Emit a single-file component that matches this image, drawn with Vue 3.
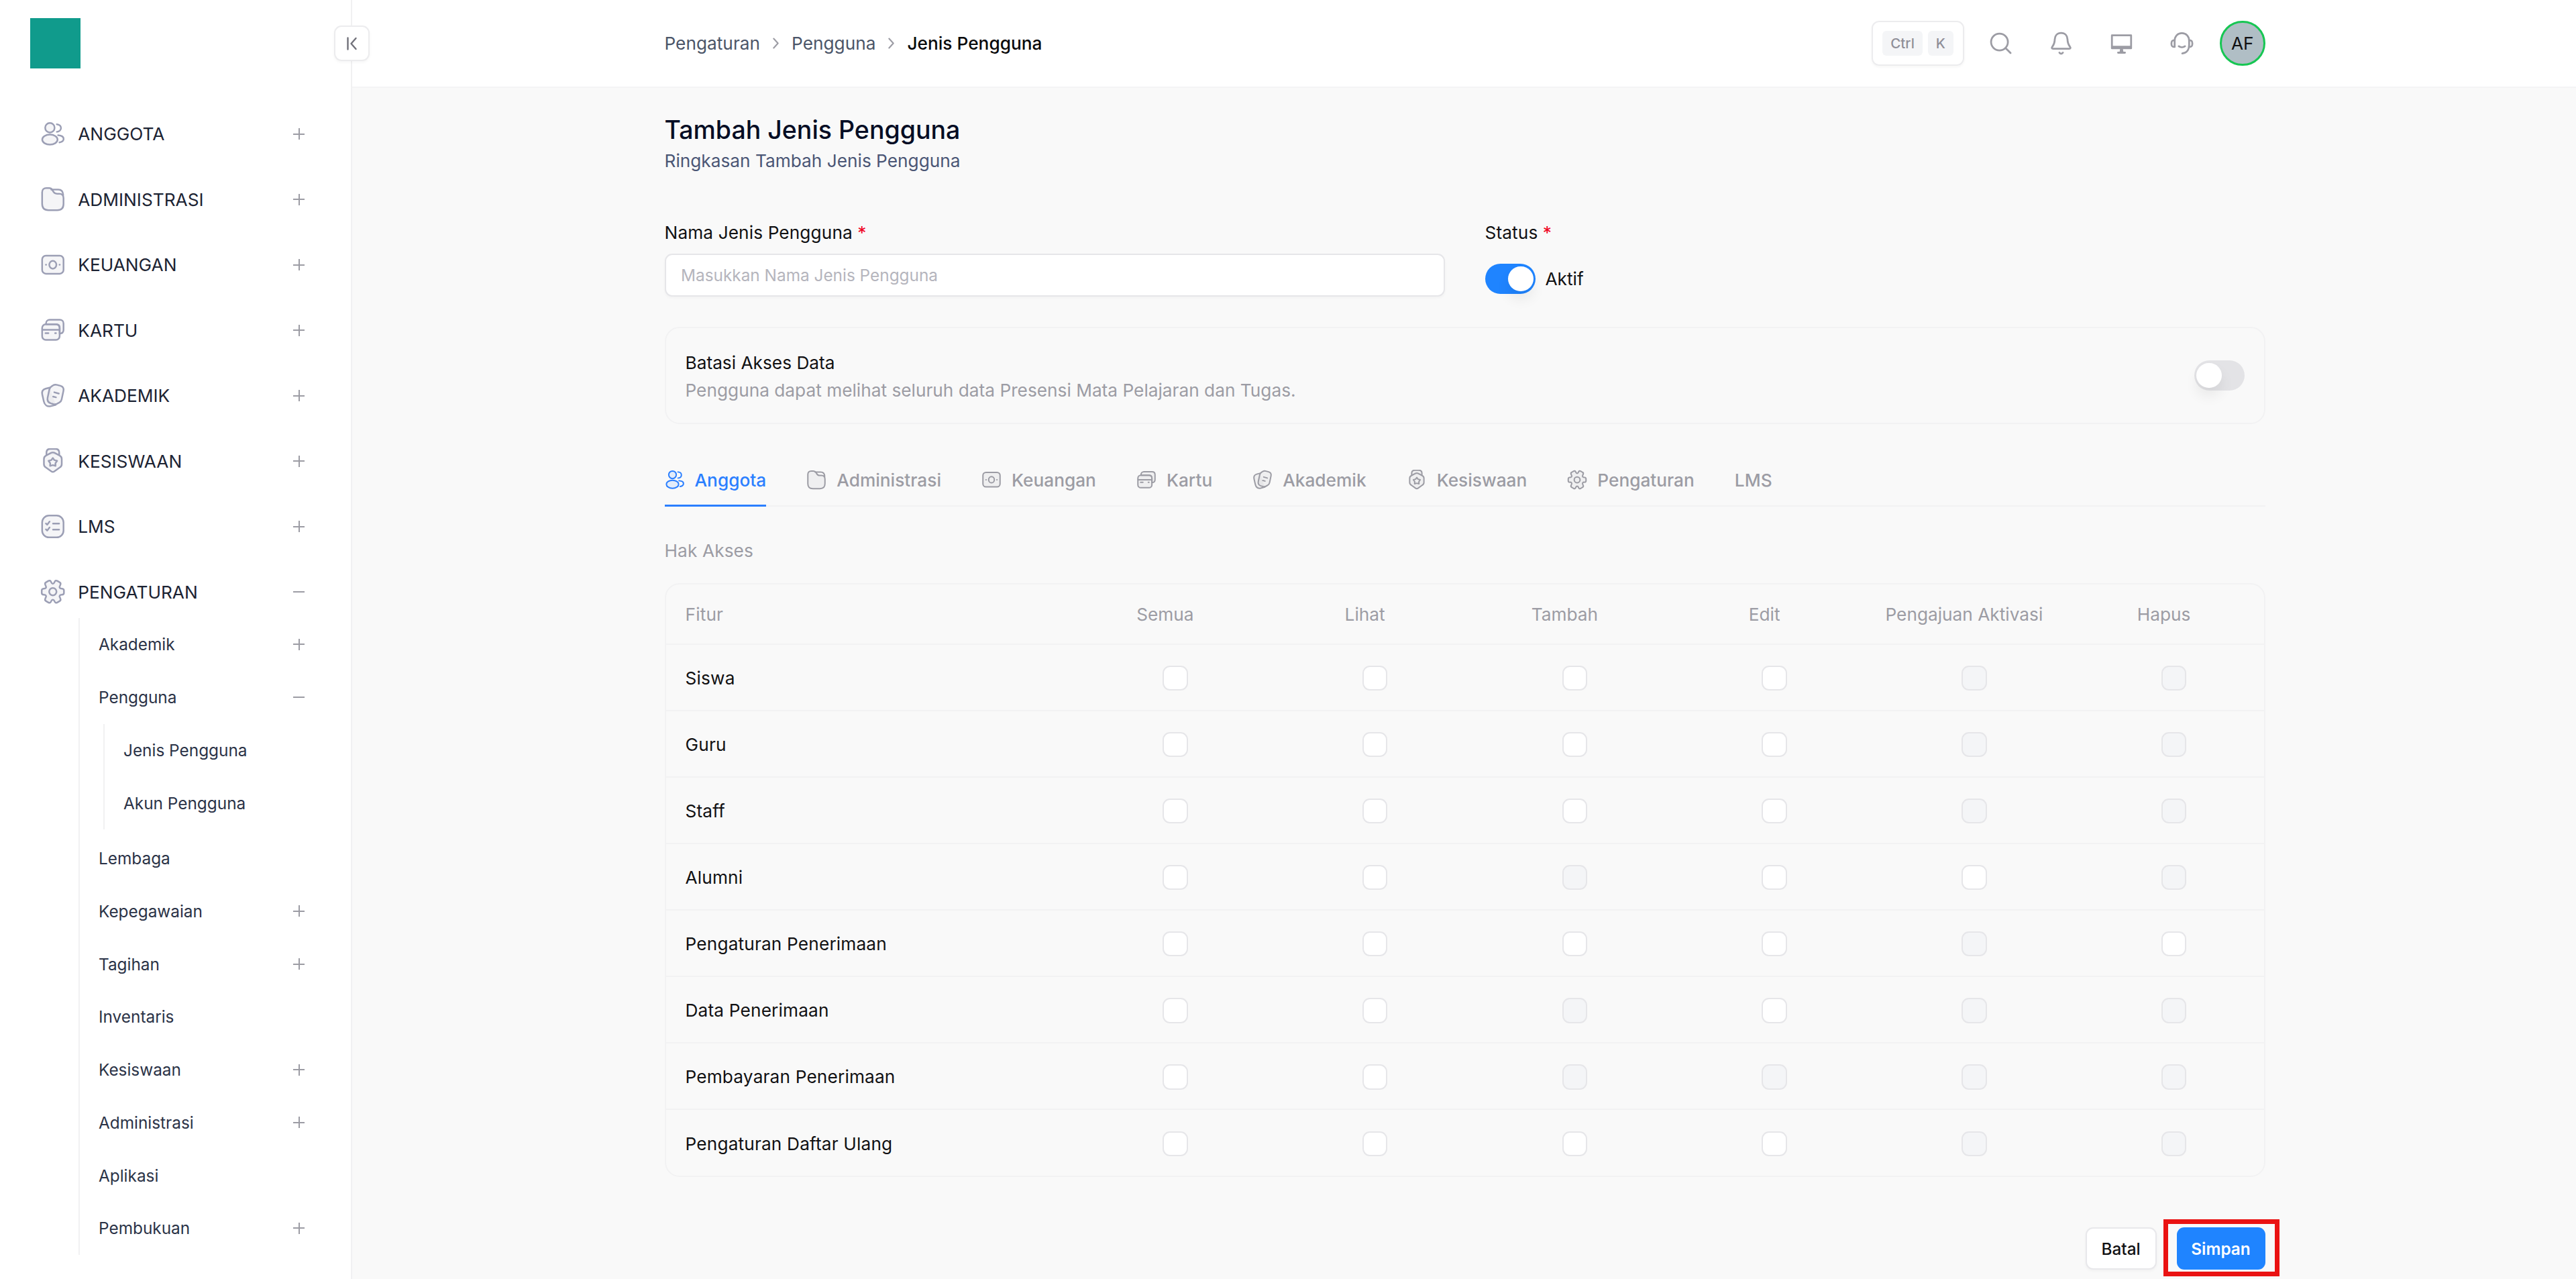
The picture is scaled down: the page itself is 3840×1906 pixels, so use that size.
<template>
  <div class="app">
    <!-- icon sprite -->
    <svg
      class="sprite"
      aria-hidden="true"
    >
      <symbol
        id="ic-anggota"
        viewBox="0 0 24 24"
      >
        <circle
          class="tint"
          cx="9.2"
          cy="6"
          r="4.5"
        />
        <ellipse
          class="tint"
          cx="9.2"
          cy="17.3"
          rx="7.3"
          ry="4.8"
        />
        <path d="M15.8 2.7c2.4.2 4 1.7 4 3.6s-1.6 3.4-4 3.6M17 13.1c3.2.3 5.3 1.7 5.3 3.5 0 1.6-1.5 2.9-4 3.4" />
      </symbol>
      <symbol
        id="ic-administrasi"
        viewBox="0 0 24 24"
      >
        <path
          class="tint"
          d="M1.8 8V5.5C1.8 3 3.4 1.5 5.8 1.5h2.7c1.500 0 2.300.6 3 1.700l1 1.700c.9 1.500 1.900 1.900 3.500 1.900h2.200c2.800.1 4 1.700 4 4.300v5.500c0 4-2 5.900-6 5.900H7.800c-4 0-6-2-6-6z"
        />
        <path d="M10.5 2.8h6.7c2.900 0 4.500 1.600 4.700 5.200" />
      </symbol>
      <symbol
        id="ic-keuangan"
        viewBox="0 0 24 24"
      >
        <rect
          class="tint"
          x="1.8"
          y="3.2"
          width="20.4"
          height="17.2"
          rx="3.6"
        />
        <ellipse
          cx="12"
          cy="11.9"
          rx="3.4"
          ry="3.7"
        />
        <path d="M5.4 11.9h.2M18.400 11.900h.2" />
      </symbol>
      <symbol
        id="ic-kartu"
        viewBox="0 0 24 24"
      >
        <path
          class="tint"
          d="M5.500 6.600V5.800c0-2 1.500-3.500 3.500-3.500h9.600c2.300 0 3.600 1.500 3.600 3.500v6.200c0 2-1.200 3.300-3.700 3.500V9.900c0-2-1.300-3.300-3.300-3.300z"
        />
        <rect
          class="tint"
          x="1.8"
          y="6.6"
          width="16.7"
          height="14.8"
          rx="3.5"
        />
        <path d="M2 11.900h16.300M5 15h2.800M14.200 15h.8" />
      </symbol>
      <symbol
        id="ic-akademik"
        viewBox="0 0 24 24"
      >
        <path
          class="tint"
          d="M8.800 4.300 5 5.300C2.500 6.100 1.300 8 1.900 10.800l1.500 6.600c.8 3.500 3.300 5.200 6.400 4.600l5-1.300"
        />
        <path
          class="tint"
          d="M12.600 1.900c1.200-.6 2.400-.5 3.600-.2l3 .8c2.400.7 3.500 2.400 2.900 5l-1.700 8c-.3 1.500-1 2.400-2.200 3l-2.400 1.300c-1.100.5-2.100.5-3.300.2l-2.400-.7C7.700 18.500 6.500 16.500 7 14l1.700-8c.4-1.600 1.100-2.500 2.400-3.200z"
        />
        <path d="m13.400 8.700 4.300 1.200M12.300 12.800l2.700.7" />
      </symbol>
      <symbol
        id="ic-kesiswaan"
        viewBox="0 0 24 24"
      >
        <path
          class="tint"
          d="M5.900 6V4.300C5.900 1.800 7.200.6 9.600.6h4.800c2.400 0 3.700 1.200 3.700 3.700V6"
        />
        <path
          class="tint"
          d="M10.600 4.300c1-.5 1.800-.5 2.800 0l5.100 2.700c1.300.7 2 1.700 2 3.200v5c0 1.500-.7 2.500-2 3.200l-5.100 3.700c-1 .7-1.800.7-2.800 0l-5.100-3.700c-1.300-.7-2-1.700-2-3.200v-5c0-1.500.7-2.500 2-3.200z"
        />
        <path d="m12 9.300 1.500 2 2.600.7-1.600 2.200.1 2.600-2.600-.7-2.600.7.1-2.600L7.900 12l2.600-.7z" />
      </symbol>
      <symbol
        id="ic-lms"
        viewBox="0 0 24 24"
      >
        <rect
          class="tint"
          x="1.8"
          y="1.5"
          width="20.4"
          height="20.8"
          rx="6.5"
        />
        <path d="m5.400 9 1.200 1.200 2.300-3M5.400 14.600l1.200 1.200 2.300-3M12.200 9.100H18M12.200 14.900H18" />
      </symbol>
      <symbol
        id="ic-pengaturan"
        viewBox="0 0 24 24"
      >
        <path
          class="tint"
          d="M12 4.400C13.300 4.400 13.400 3.200 13.800 2.400C14.300 1.400 15.200 1.100 16.200 1.700L18.400 3C19.500 3.600 19.600 4.600 19.200 5.500C18.800 6.500 17.900 7.300 18.600 8.300C19.200 9.200 20 9.100 20.900 9.100C22 9.200 22.600 9.900 22.600 10.900V13.100C22.600 14.100 22 14.800 20.900 14.900C20 14.900 19.200 14.800 18.600 15.700C17.900 16.700 18.800 17.500 19.200 18.500C19.600 19.400 19.500 20.400 18.400 21L16.200 22.300C15.200 22.900 14.300 22.600 13.800 21.600C13.400 20.800 13.300 19.600 12 19.600C10.700 19.600 10.600 20.800 10.200 21.600C9.700 22.600 8.800 22.900 7.800 22.300L5.600 21C4.500 20.400 4.400 19.400 4.800 18.500C5.200 17.500 6.100 16.700 5.400 15.700C4.800 14.800 4 14.900 3.100 14.900C2 14.800 1.400 14.100 1.400 13.100V10.900C1.400 9.900 2 9.200 3.100 9.100C4 9.100 4.800 9.200 5.400 8.300C6.100 7.300 5.200 6.500 4.800 5.500C4.400 4.600 4.500 3.600 5.600 3L7.800 1.700C8.800 1.100 9.700 1.400 10.200 2.400C10.600 3.200 10.700 4.400 12 4.400z"
        />
        <circle
          cx="12"
          cy="12"
          r="3.5"
        />
      </symbol>
      <symbol
        id="ic-search"
        viewBox="0 0 24 24"
      >
        <circle
          cx="10.7"
          cy="10.7"
          r="8.6"
        />
        <path d="m17 17 5 5" />
      </symbol>
      <symbol
        id="ic-bell"
        viewBox="0 0 24 24"
      >
        <path d="M12 1.500c3.900 0 6.300 2.600 6.500 6.500.1 3.300.8 5.300 2.500 7.500 1 1.300.6 2-.8 2H3.800c-1.400 0-1.800-.7-.8-2 1.700-2.200 2.400-4.200 2.500-7.500.2-3.900 2.600-6.500 6.500-6.500zM10.200 21.500c.8 1.500 2.800 1.500 3.600 0" />
      </symbol>
      <symbol
        id="ic-monitor"
        viewBox="0 0 24 24"
      >
        <path d="M2.200 3.900h19.600v13.200H2.200z" />
        <path
          class="solid"
          d="M2.200 14.500h19.600v2.800H2.200zM10.600 17.300h2.800l.6 3.700h-4z"
        />
        <path d="M8.500 21.600h7" />
      </symbol>
      <symbol
        id="ic-headset"
        viewBox="0 0 24 24"
      >
        <path d="M4.600 9.500C4.600 4.800 7.600 1.700 12 1.700s7.400 3.100 7.400 7.800v4.200c0 5-2.800 8.300-7 8.700M4.600 8.800C2 8.800 1.300 9.700 1.300 12.300s.7 3.400 3.300 3.400zM19.400 8.800c2.600 0 3.300.9 3.300 3.500s-.7 3.400-3.300 3.400M8.800 15c1.800 1.400 4.600 1.400 6.400 0" />
      </symbol>
    </svg>

    <aside class="sidebar">
      <div class="brand">
        <div class="logo" />
      </div>
      <button class="collapse-btn">
        <svg
          class="collapse-icon"
          viewBox="0 0 16 20"
        >
          <path d="M2 1.500v17M14 2 7 10l7 8" />
        </svg>
      </button>

      <nav class="menu">
        <div
          v-for="item in menu"
          :key="item.label"
          class="menu-item"
        >
          <svg class="icon">
            <use :href="`#ic-${item.icon}`" />
          </svg>
          <span class="menu-label">{{ item.label }}</span>
          <span
            class="sign"
            :class="{ open: item.open }"
          />
        </div>
      </nav>

      <div class="submenu">
        <template
          v-for="sub in submenu"
          :key="sub.label"
        >
          <div class="sub-item">
            <span>{{ sub.label }}</span>
            <span
              v-if="sub.expandable"
              class="sign"
              :class="{ open: sub.children }"
            />
          </div>
          <div
            v-if="sub.children"
            class="sub-children"
          >
            <div
              v-for="child in sub.children"
              :key="child"
              class="sub-item"
            >
              {{ child }}
            </div>
          </div>
        </template>
      </div>
    </aside>

    <div class="page">
      <header class="header">
        <div class="container header-inner">
          <div class="breadcrumb">
            <span>Pengaturan</span>
            <svg
              class="chevron"
              viewBox="0 0 10 16"
            >
              <path d="m2 1.500 6 6.500-6 6.500" />
            </svg>
            <span>Pengguna</span>
            <svg
              class="chevron"
              viewBox="0 0 10 16"
            >
              <path d="m2 1.500 6 6.500-6 6.500" />
            </svg>
            <span class="current">Jenis Pengguna</span>
          </div>

          <div class="toolbar">
            <div class="shortcut">
              <kbd>Ctrl</kbd>
              <kbd>K</kbd>
            </div>
            <svg
              v-for="name in tools"
              :key="name"
              class="tool-icon"
            >
              <use :href="`#ic-${name}`" />
            </svg>
            <div class="avatar">
              AF
            </div>
          </div>
        </div>
      </header>

      <main class="container content">
        <h1>Tambah Jenis Pengguna</h1>
        <p class="subtitle">
          Ringkasan Tambah Jenis Pengguna
        </p>

        <div class="form-row">
          <div class="field name-field">
            <label>Nama Jenis Pengguna <i>*</i></label>
            <input
              type="text"
              placeholder="Masukkan Nama Jenis Pengguna"
            >
          </div>
          <div class="field">
            <label>Status <i>*</i></label>
            <div class="status">
              <span class="toggle on" />
              <span>Aktif</span>
            </div>
          </div>
        </div>

        <div class="card">
          <div class="card-text">
            <div class="card-title">
              Batasi Akses Data
            </div>
            <div class="card-desc">
              Pengguna dapat melihat seluruh data Presensi Mata Pelajaran dan Tugas.
            </div>
          </div>
          <span class="toggle" />
        </div>

        <div class="tabs">
          <div
            v-for="tab in tabs"
            :key="tab.label"
            class="tab"
            :class="{ active: tab.label === activeTab }"
          >
            <svg
              v-if="tab.icon"
              class="tab-icon"
            >
              <use :href="`#ic-${tab.icon}`" />
            </svg>
            <span>{{ tab.label }}</span>
          </div>
        </div>

        <div class="section-title">
          Hak Akses
        </div>

        <div class="table">
          <div class="row head">
            <div class="feature">
              Fitur
            </div>
            <div
              v-for="col in columns"
              :key="col"
              class="col-head"
            >
              {{ col }}
            </div>
          </div>
          <div
            v-for="row in rows"
            :key="row.label"
            class="row"
          >
            <div class="feature">
              {{ row.label }}
            </div>
            <div
              v-for="col in columns"
              :key="col"
              class="cell"
            >
              <span
                class="checkbox"
                :class="{ disabled: row.disabled.includes(col) }"
              />
            </div>
          </div>
        </div>

        <div class="actions">
          <button class="btn">
            Batal
          </button>
          <div class="save-wrap">
            <button class="btn primary">
              Simpan
            </button>
            <div class="highlight" />
          </div>
        </div>
      </main>
    </div>
  </div>
</template>

<script setup>
import { ref } from 'vue';

const menu = [
  { label: 'ANGGOTA', icon: 'anggota' },
  { label: 'ADMINISTRASI', icon: 'administrasi' },
  { label: 'KEUANGAN', icon: 'keuangan' },
  { label: 'KARTU', icon: 'kartu' },
  { label: 'AKADEMIK', icon: 'akademik' },
  { label: 'KESISWAAN', icon: 'kesiswaan' },
  { label: 'LMS', icon: 'lms' },
  { label: 'PENGATURAN', icon: 'pengaturan', open: true }
];

const submenu = [
  { label: 'Akademik', expandable: true },
  { label: 'Pengguna', expandable: true, children: ['Jenis Pengguna', 'Akun Pengguna'] },
  { label: 'Lembaga' },
  { label: 'Kepegawaian', expandable: true },
  { label: 'Tagihan', expandable: true },
  { label: 'Inventaris' },
  { label: 'Kesiswaan', expandable: true },
  { label: 'Administrasi', expandable: true },
  { label: 'Aplikasi' },
  { label: 'Pembukuan', expandable: true }
];

const tools = ['search', 'bell', 'monitor', 'headset'];

const activeTab = ref('Anggota');
const tabs = [
  { label: 'Anggota', icon: 'anggota' },
  { label: 'Administrasi', icon: 'administrasi' },
  { label: 'Keuangan', icon: 'keuangan' },
  { label: 'Kartu', icon: 'kartu' },
  { label: 'Akademik', icon: 'akademik' },
  { label: 'Kesiswaan', icon: 'kesiswaan' },
  { label: 'Pengaturan', icon: 'pengaturan' },
  { label: 'LMS' }
];

const columns = ['Semua', 'Lihat', 'Tambah', 'Edit', 'Pengajuan Aktivasi', 'Hapus'];

const rows = [
  { label: 'Siswa', disabled: ['Pengajuan Aktivasi', 'Hapus'] },
  { label: 'Guru', disabled: ['Pengajuan Aktivasi', 'Hapus'] },
  { label: 'Staff', disabled: ['Pengajuan Aktivasi', 'Hapus'] },
  { label: 'Alumni', disabled: ['Tambah', 'Hapus'] },
  { label: 'Pengaturan Penerimaan', disabled: ['Pengajuan Aktivasi'] },
  { label: 'Data Penerimaan', disabled: ['Tambah', 'Pengajuan Aktivasi', 'Hapus'] },
  { label: 'Pembayaran Penerimaan', disabled: ['Tambah', 'Edit', 'Pengajuan Aktivasi', 'Hapus'] },
  { label: 'Pengaturan Daftar Ulang', disabled: ['Pengajuan Aktivasi', 'Hapus'] }
];
</script>

<style>
body {
  background-color: #f9f9f9;
  overflow: hidden;
}
</style>

<style scoped>
.app {
  display: flex;
  height: 1906px;
  overflow: hidden;
  background-color: #f9f9f9;
  font-family: Inter, "Liberation Sans", sans-serif;
  font-size: 26.25px;
  color: #111113;
}

.app * {
  box-sizing: border-box;
}

.sprite {
  position: absolute;
  width: 0;
  height: 0;
}

svg {
  fill: none;
  stroke: currentColor;
  stroke-width: 1.6;
  stroke-linecap: round;
  stroke-linejoin: round;
  flex-shrink: 0;
}

.tint {
  fill: currentColor;
  fill-opacity: 0.1;
}

.solid {
  fill: currentColor;
  stroke: none;
}

/* sidebar */
.sidebar {
  position: relative;
  width: 525px;
  flex-shrink: 0;
  background-color: #fff;
  border-right: 2px solid #f1f1f2;
}

.brand {
  padding: 27px 0 0 45px;
  height: 162px;
}

.logo {
  width: 75px;
  height: 75px;
  background-color: #109b8c;
}

.collapse-btn {
  position: absolute;
  top: 38px;
  right: -28px;
  width: 53px;
  height: 53px;
  padding: 0;
  display: flex;
  align-items: center;
  justify-content: center;
  background-color: #fff;
  border: 2px solid #ececee;
  border-radius: 11px;
  box-shadow: 0 2px 4px rgba(0, 0, 0, 0.04);
  color: #71717a;
}

.collapse-icon {
  width: 17px;
  height: 20px;
  stroke-width: 2.4;
}

.menu {
  display: flex;
  flex-direction: column;
  gap: 22.5px;
}

.menu-item {
  display: flex;
  align-items: center;
  height: 75px;
  padding: 0 69px 0 60px;
}

.icon {
  width: 37.5px;
  height: 37.5px;
  margin-right: 18.75px;
  color: #9c9fb5;
}

.menu-label {
  flex: 1;
  color: #1c2333;
}

.sign {
  position: relative;
  width: 17px;
  height: 17px;
  flex-shrink: 0;
}

.sign::before,
.sign::after {
  content: "";
  position: absolute;
  background-color: #9c9ca4;
}

.sign::before {
  left: 0;
  top: 7.5px;
  width: 17px;
  height: 2px;
}

.sign::after {
  left: 7.5px;
  top: 0;
  width: 2px;
  height: 17px;
}

.sign.open::after {
  display: none;
}

.submenu {
  margin: 1.5px 69px 0 117px;
  padding-left: 28px;
  border-left: 2px solid #f1f1f2;
}

.sub-item {
  display: flex;
  align-items: center;
  justify-content: space-between;
  height: 78.75px;
  font-size: 24.375px;
  color: #2b3347;
}

.sub-children {
  margin-left: 7px;
  margin-bottom: 3.75px;
  padding-left: 28px;
  border-left: 2px solid #f1f1f2;
}

/* header */
.page {
  flex: 1;
}

.header {
  height: 131px;
  background-color: #fff;
  border-bottom: 2px solid #f4f4f5;
}

.container {
  width: 2386px;
  margin-left: 465.5px;
}

.header-inner {
  height: 129px;
  display: flex;
  align-items: center;
  justify-content: space-between;
}

.breadcrumb {
  display: flex;
  align-items: center;
  color: #4b5568;
}

.chevron {
  width: 11px;
  height: 17px;
  margin: 0 18px;
  color: #9c9ca4;
  stroke-width: 2;
}

.current {
  font-weight: 500;
  color: #09090b;
}

.toolbar {
  display: flex;
  align-items: center;
}

.shortcut {
  display: flex;
  align-items: center;
  gap: 8px;
  height: 67.5px;
  margin-right: 37px;
  padding: 0 14px;
  border: 2px solid #ececee;
  border-radius: 11px;
  box-shadow: 0 2px 4px rgba(0, 0, 0, 0.04);
}

kbd {
  padding: 0 12px;
  height: 37.5px;
  line-height: 37.5px;
  border-radius: 6px;
  background-color: #f4f5f7;
  color: #8f8f98;
  font-family: inherit;
  font-size: 20.6px;
  font-weight: 500;
}

.tool-icon {
  width: 35px;
  height: 35px;
  margin-right: 55px;
  color: #9c9ca4;
  stroke-width: 1.9;
}

.tool-icon:nth-last-child(2) {
  margin-right: 39px;
}

.avatar {
  width: 67.5px;
  height: 67.5px;
  border: 3px solid #17c653;
  border-radius: 50%;
  background-color: #b0bec5;
  text-align: center;
  line-height: 61.5px;
}

/* content */
.content {
  padding-top: 39px;
}

h1 {
  margin: 0;
  font-size: 37.5px;
  line-height: 48px;
  font-weight: 500;
  color: #050d24;
}

.subtitle {
  margin: 0;
  line-height: 44px;
  color: #4b5675;
}

.form-row {
  display: flex;
  gap: 60px;
  margin-top: 67px;
}

.name-field {
  width: 1163px;
}

label {
  display: block;
  line-height: 36px;
  letter-spacing: 0.1px;
}

label i {
  font-style: normal;
  color: #f00020;
}

input {
  display: block;
  width: 100%;
  height: 64px;
  margin-top: 13px;
  padding: 0 22.5px;
  border: 2px solid #e6e6e9;
  border-radius: 11px;
  box-shadow: 0 2px 4px rgba(0, 0, 0, 0.03);
  background-color: #fff;
  font-family: inherit;
  font-size: 24.375px;
}

input::placeholder {
  color: #b5b5bd;
  opacity: 1;
}

.status {
  display: flex;
  align-items: center;
  gap: 15px;
  margin-top: 28px;
}

.toggle {
  width: 75px;
  height: 45px;
  padding: 3.75px;
  border-radius: 23px;
  background-color: #e3e3e6;
}

.toggle::before {
  content: "";
  display: block;
  width: 37.5px;
  height: 37.5px;
  border-radius: 50%;
  background-color: #fff;
  box-shadow: 0 12px 20px rgba(0, 0, 0, 0.07);
}

.toggle.on {
  background-color: #1f84ff;
}

.toggle.on::before {
  margin-left: 31px;
}

.card {
  display: flex;
  align-items: center;
  justify-content: space-between;
  height: 145px;
  margin-top: 45px;
  padding: 0 29px;
  border: 2px solid #f2f2f3;
  border-radius: 22px;
}

.card-text {
  padding-top: 2px;
  line-height: 41px;
}

.card-desc,
.section-title {
  color: #9c9ca4;
}

.tabs {
  display: flex;
  gap: 60px;
  height: 80px;
  margin-top: 43px;
  border-bottom: 2px solid #f2f2f3;
}

.tab {
  display: flex;
  align-items: center;
  height: 80px;
  padding-top: 3px;
  gap: 15px;
  border-bottom: 3px solid transparent;
  color: #9c9ca4;
  font-weight: 500;
}

.tab.active {
  color: #2b7fff;
  border-bottom-color: #2b7fff;
}

.tab-icon {
  width: 30px;
  height: 30px;
}

.section-title {
  margin-top: 48px;
  line-height: 36px;
  letter-spacing: 0.1px;
}

.table {
  margin-top: 30px;
  border: 2px solid #f2f2f3;
  border-radius: 22px;
}

.row {
  display: grid;
  grid-template-columns: 1fr repeat(6, 297.75px);
  align-items: center;
  height: 99.05px;
  padding-top: 2px;
  border-bottom: 2px solid #f2f2f3;
}

.row.head {
  height: 90px;
  padding-top: 0;
  color: #9c9ca4;
}

.row:last-child {
  height: 98px;
  border-bottom: none;
}

.feature {
  padding-left: 29px;
  letter-spacing: 0.15px;
}

.col-head {
  text-align: center;
}

.cell {
  display: flex;
  justify-content: center;
  padding-left: 30px;
}

.checkbox {
  width: 37.5px;
  height: 37.5px;
  border: 2px solid #e6e6e9;
  border-radius: 11px;
  background-color: #fff;
}

.checkbox.disabled {
  background-color: #f4f5f7;
}

.actions {
  display: flex;
  justify-content: flex-end;
  gap: 30px;
  margin-top: 75px;
}

.btn {
  width: 106px;
  height: 63px;
  padding: 0;
  border: 2px solid #e8e8eb;
  border-radius: 11px;
  background-color: #fff;
  box-shadow: 0 2px 4px rgba(0, 0, 0, 0.04);
  color: #111113;
  font-family: inherit;
  font-size: 24.375px;
  font-weight: 500;
}

.btn.primary {
  width: 132px;
  border: none;
  background-color: #1f84ff;
  box-shadow: none;
  color: #fff;
  font-weight: 600;
}

.save-wrap {
  position: relative;
}

/* frame drawn around the save button */
.highlight {
  position: absolute;
  top: -12.5px;
  left: -20px;
  width: 173px;
  height: 85.5px;
  border: 7.5px solid #ea1212;
}
</style>
